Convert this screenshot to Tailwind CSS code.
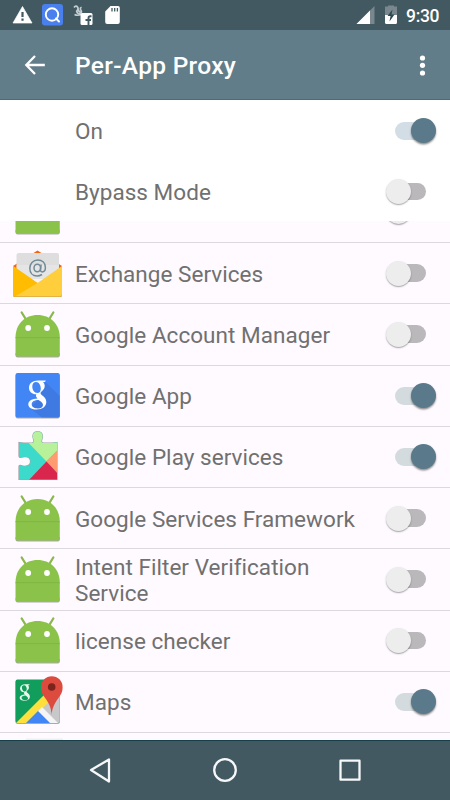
<!DOCTYPE html>
<html lang="en">
<head>
<meta charset="utf-8">
<title>Per-App Proxy</title>
<script src="https://cdn.jsdelivr.net/npm/@tailwindcss/browser@4"></script>
</head>
<body class="w-[450px] h-[800px] overflow-hidden flex flex-col bg-white font-[Roboto,sans-serif] text-[#707070]">
<svg class="hidden">
  <defs>
    <linearGradient id="shade" x1="0" y1="0" x2="1" y2="1"><stop offset="0" stop-color="#000" stop-opacity=".16"/><stop offset="1" stop-color="#000" stop-opacity="0"/></linearGradient>
    <symbol id="android" viewBox="0 0 75 61">
      <path d="M15.500 49v2.500a2 2 0 0 0 2 2h40.300a2 2 0 0 0 2-2V49z" fill="#a9a9a9"/>
      <path d="M21.700 8.500l4 6.500M53.300 8.500l-4 6.500" stroke="#8bb84a" stroke-width="2.300" stroke-linecap="round"/>
      <path d="M15.500 33.500C15.500 20 25 11 37.600 11s22.200 9 22.200 22.500v17a2 2 0 0 1-2 2H17.500a2 2 0 0 1-2-2z" fill="#8bc34a"/>
      <path d="M15.500 34h44.300v16.500a2 2 0 0 1-2 2H34z" fill="url(#shade)"/>
      <path d="M15.500 33.700h44.300" stroke="#7cb042" stroke-width=".8"/>
      <circle cx="28.200" cy="24" r="2.900" fill="#fff"/><circle cx="47" cy="24" r="2.900" fill="#fff"/>
    </symbol>
  </defs>
</svg>

<header class="shrink-0">
  <div class="h-[30px] bg-[#425962]">
    <svg class="w-full h-[30px]" viewBox="0 0 450 30">
      <path d="M22.500 6.500L32 23H13z" fill="#fff" stroke="#fff" stroke-linejoin="round" stroke-width=".7"/><path d="M22.500 12v5M22.500 18.500v2.300" stroke="#425962" stroke-width="2.200"/>
      <rect x="42" y="4" width="21" height="21.500" rx="3" fill="#4a80ee"/><circle cx="52" cy="14.500" r="6.200" fill="none" stroke="#fff" stroke-width="1.900"/><path d="M56 18.500l3 3" stroke="#fff" stroke-width="2" stroke-linecap="round"/>
      <path d="M74 7.500q2-2.500 3.500-.5t-.8 4.200q.8 3.300 3.300 2.300 2.500-1.300.8-3.500-1.300-2 .8-2.800M74.500 14.500q3 1.500 7 0M78 8q-.5 3 2.500 4.500" fill="none" stroke="#c3ccd0" stroke-width="1.700"/>
      <rect x="80.500" y="13" width="12" height="12" rx="1.500" fill="#fff"/><path d="M91.500 16.200h-1.300q-1.700 0-1.700 1.800v7M85.500 20h5.500" fill="none" stroke="#425962" stroke-width="1.900"/>
      <path d="M110.500 6H118a1.800 1.800 0 0 1 1.800 1.800V22a2 2 0 0 1-2 2h-10.600a2 2 0 0 1-2-2V11.500z" fill="#fff"/><path d="M112 8v3.500M114.700 8v3.500M117.400 8v3.500" stroke="#425962" stroke-width="1.300"/>
      <path d="M374.500 6v18h-18z" fill="#78888e"/><path d="M370 10.500V24h-13.500z" fill="#fff"/>
      <path d="M388 6h2.500v-1h-2.500zM388 5.500h6v1h3V15h-12V6.500h3z" fill="#78888e"/><path d="M385 15h12v7.500a1.500 1.500 0 0 1-1.500 1.500h-9a1.500 1.500 0 0 1-1.500-1.500z" fill="#fff"/><path d="M392.500 9.500l-5 6.500h3l-1 5.500 5-7h-3z" fill="#2f474f"/>
      <text x="406" y="22" font-size="17.500" font-weight="500" fill="#fff" textLength="33.500">9:30</text>
    </svg>
  </div>
  <div class="h-[70px] bg-[#627d8a] border-b border-[#4d6c7b] flex items-center text-white">
    <svg class="w-[75px] h-[70px]" viewBox="0 0 75 70"><path d="M44.800 35H27M35 26L26.300 35l8.700 9" fill="none" stroke="#fff" stroke-width="2.300"/></svg>
    <h1 class="flex-1 text-[24.500px] tracking-[0.300px] font-medium leading-[30px] pt-[3px]">Per-App Proxy</h1>
    <svg class="w-[55px] h-[70px]" viewBox="0 0 55 70" fill="#fff"><circle cx="27.500" cy="28" r="2.600"/><circle cx="27.500" cy="35.300" r="2.600"/><circle cx="27.500" cy="43" r="2.600"/></svg>
  </div>
</header>

<section class="shrink-0 h-[121px] bg-white text-[22.500px]" id="settings"></section>
<main class="h-[519px] shrink-0 overflow-hidden bg-[#fefaff] text-[22.500px]">
  <div class="-mt-[39.250px]" id="apps"></div>
</main>
<nav class="h-[60px] shrink-0 bg-[#425962] border-t border-[#163f4b]">
  <svg class="w-full h-[59px]" viewBox="0 1 450 59" fill="none" stroke="#f5f7f8" stroke-width="2.300" stroke-linejoin="round"><path d="M109 19.500v22L91 30z"/><circle cx="225" cy="30" r="10.800"/><rect x="340.500" y="20.700" width="19" height="19"/></svg>
</nav>

<script>
const icons = {
android: '<use href="#android"/>',
exchange: '<path d="M13 23l24.500-15.500L62 23l-4 8H17z" fill="#f4650c"/><path d="M16.500 12a2 2 0 0 1 2-2H57a2 2 0 0 1 2 2v24H16.500z" fill="#dedede"/><path d="M16.500 25.500L37.500 40 59 25.500V22H16.500z" fill="#ececec" opacity=".5"/><path d="M13 51v1.500a1.500 1.500 0 0 0 1.500 1.500h46a1.500 1.500 0 0 0 1.500-1.500V51z" fill="#c59b54"/><path d="M13 23l24.500 17L62 23v28.500a2 2 0 0 1-2 2H15a2 2 0 0 1-2-2z" fill="#ffce3d"/><path d="M13 23l24.500 17L15 53.500a2 2 0 0 1-2-2z" fill="#ffbc00"/><g fill="none" stroke="#708b97" stroke-width="1.500"><path d="M42 31.500Q39.500 33 37.200 33C32.500 33 29.800 29.600 29.800 25.200S33 17 37.700 17s7.700 3 7.700 7.300c0 2.700-1.300 4.600-3.100 4.600-1.500 0-2-1-1.800-2.700l.6-4.700"/><ellipse cx="37.300" cy="25" rx="3.300" ry="3.800"/></g>',
google: '<rect x="15.500" y="9" width="44.300" height="44.500" rx="2" fill="#aaa"/><rect x="15.500" y="8" width="44.300" height="44.500" rx="2" fill="#4285f4"/><path d="M45.500 17L59.800 31v19.500a2 2 0 0 1-2 2H42L30 43l8-8z" fill="#3a6fd0" opacity=".5"/><path d="M45.800 15.500H38c-5.500 0-9 3-9 7.200 0 4 3 6.500 7.300 6.500-.8 2 .1 3 1.200 4.200-5.300.2-9.200 2.200-9.200 5.800 0 3.500 3.700 5.300 8.200 5.300 6 0 9.800-3 9.800-7.500 0-3-1.700-4.700-4-6.500-2.300-1.700-2.300-2.700-.5-4.200 2-1.700 2.900-3.200 2.900-5.300 0-1.700-.7-3-1.700-4H45zM37.300 28c-3 0-5-3.200-5-6.500 0-2.500 1.300-4.500 3.700-4.500 3.200 0 4.800 3.500 4.800 6.700 0 2.800-1.300 4.300-3.500 4.300zM38.500 35c3 1.900 4.500 3.100 4.500 5 0 2-1.700 3.400-5 3.400-4 0-6.300-1.700-6.300-4.200 0-2.800 2.800-4 6.800-4.200z" fill="#fff"/>',
play: '<clipPath id="pz"><path d="M19 16.500q7 .8 13 .5c2.500-.2 2.200-2 1.400-4-1.400-3.500-.2-7.500 4.200-7.500s5.800 4 4.400 7.500c-.8 2-1 3.800 1.400 4q6.600.3 13.600-.5v37H19V40.500q0-1.500 2-1c3.500 1.500 9.500 1 9.500-4s-5.500-5.500-9-4.200q-2.500.8-2.500-1.500z"/></clipPath><g opacity=".6" fill="none" stroke="#666" stroke-width="1.200"><path d="M19 16.500q7 .8 13 .5c2.500-.2 2.200-2 1.400-4-1.400-3.500-.2-7.500 4.200-7.500s5.800 4 4.400 7.500c-.8 2-1 3.800 1.400 4q6.600.3 13.600-.5v37H19V40.500q0-1.500 2-1c3.500 1.500 9.500 1 9.500-4s-5.500-5.500-9-4.200q-2.500.8-2.500-1.500z"/></g><g clip-path="url(#pz)"><path d="M0 0h75v61H0z" fill="#3cdacb"/><path d="M18 6L46.500 35.500 75 6V0H18z" fill="#b7f29b"/><path d="M57.500 24v24L46 35.500z" fill="#ff9b70"/><path d="M46.500 35.500L28 55h32v-5z" fill="#d8264c"/></g>',
maps: '<clipPath id="mp"><rect x="15.500" y="8.500" width="44.300" height="43.500" rx="2"/></clipPath><rect x="15.500" y="9.500" width="44.300" height="43.500" rx="2" fill="#aaa"/><g clip-path="url(#mp)"><path d="M15 8h45v45H15z" fill="#119e5c"/><path d="M60 10L17 53h43z" fill="#c8c7c9"/><path d="M15 53L50 18v12L25 54z" fill="#ffdf3c"/><path d="M25 53l13.500-13.500L52 53z" fill="#4285f4"/><path d="M38 40l4-4 17 17h-8z" fill="#f5f4f7"/></g><path transform="translate(3.500 4.500) scale(.57)" d="M45.800 15.500H38c-5.500 0-9 3-9 7.200 0 4 3 6.500 7.300 6.500-.8 2 .1 3 1.200 4.200-5.300.2-9.200 2.200-9.200 5.800 0 3.500 3.700 5.300 8.200 5.300 6 0 9.800-3 9.800-7.500 0-3-1.700-4.700-4-6.500-2.300-1.700-2.300-2.700-.5-4.200 2-1.700 2.900-3.200 2.900-5.300 0-1.700-.7-3-1.700-4H45zM37.300 28c-3 0-5-3.200-5-6.500 0-2.500 1.300-4.500 3.700-4.500 3.200 0 4.800 3.500 4.800 6.700 0 2.800-1.300 4.300-3.500 4.300zM38.500 35c3 1.900 4.500 3.100 4.500 5 0 2-1.700 3.400-5 3.400-4 0-6.300-1.700-6.300-4.200 0-2.800 2.800-4 6.800-4.200z" fill="#e9f7ee"/><path d="M51.500 44c0-7-2.500-11.500-6-16.500-2.500-3.500-4.500-6-4.500-11.500a10.800 10.800 0 0 1 21.600 0c0 5.500-2 8-4.500 11.500-3.500 5-6 9.500-6.600 16.500z" fill="#dd4b3e"/><circle cx="51.700" cy="16" r="3.800" fill="#7b231d"/>',
next: '<path d="M26 5.500h37v20H26z" fill="#f0eef1"/>',
none: ''};
const toggle = (on, trackClass) => on
 ? `<span class="relative w-[63px] h-[26px] shrink-0"><span class="absolute left-[8px] top-[4px] w-[32px] h-[18px] rounded-full ${trackClass}"></span><span class="absolute left-[23.500px] top-[0.500px] size-[25px] rounded-full bg-[#5a798a] shadow-[0_1.500px_2px_rgba(0,0,0,0.450)]"></span></span>`
 : `<span class="relative w-[63px] h-[26px] shrink-0"><span class="absolute left-0 top-[4px] w-[39px] h-[17.500px] rounded-full bg-[#bab8bb]"></span><span class="absolute left-[-1.500px] top-[0.500px] size-[25px] rounded-full bg-[#ededed] shadow-[0_1px_1.500px_rgba(0,0,0,0.350)]"></span></span>`;
const row = (icon, name, on, rowClass, track) => `<div class="flex items-center ${rowClass}"><svg class="w-[75px] h-[61px] shrink-0" viewBox="0 0 75 61">${icons[icon]}</svg><div class="flex-1 leading-[26px] tracking-[0.040px] pr-4 pt-[1px]">${name}</div>${toggle(on, track)}</div>`;
document.getElementById('settings').innerHTML =
  row('none','On',true,'h-[61px]','bg-[#d3dde5]') + row('none','Bypass Mode',false,'h-[61px]','');
document.getElementById('apps').innerHTML = [
 ['android','',false],['exchange','Exchange Services',false],['android','Google Account Manager',false],
 ['google','Google App',true],['play','Google Play services',true],['android','Google Services Framework',false],
 ['android','Intent Filter Verification Service',false],['android','license checker',false],['maps','Maps',true],['next','',false]
].map(r => row(...r, 'h-[61.250px] border-b border-[#dcd9de]', 'bg-[#d4dbdf]')).join('');
</script>
</body>
</html>
